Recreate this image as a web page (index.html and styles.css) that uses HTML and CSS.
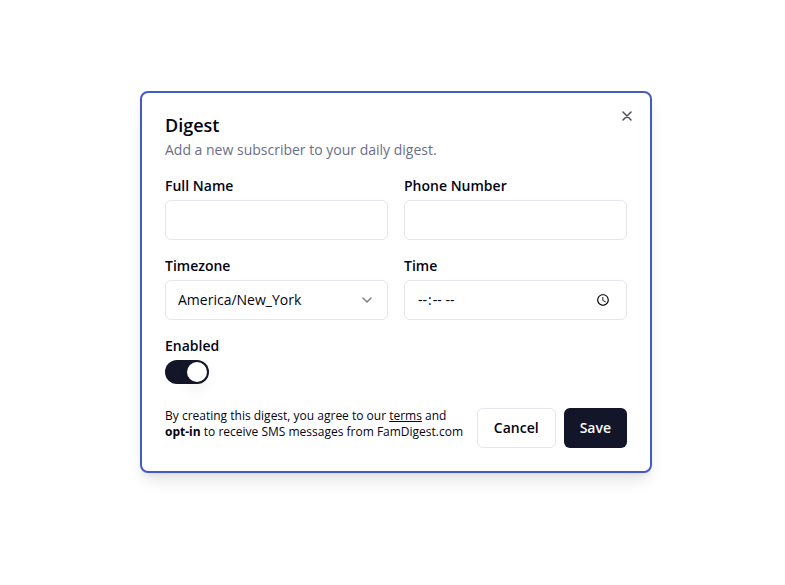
FILE: index.html
```html
<!DOCTYPE html>
<html lang="en">
<head>
<meta charset="utf-8">
<title>Digest</title>
<link rel="stylesheet" href="styles.css">
</head>
<body>
<main class="dialog" role="dialog" aria-labelledby="title">
  <header class="dialog-header">
    <h1 id="title">Digest</h1>
    <p>Add a new subscriber to your daily digest.</p>
  </header>
  <button class="close" type="button" aria-label="Close">
    <svg viewBox="0 0 16 16" width="16" height="16"><path d="M4 4l8 8M12 4l-8 8"/></svg>
  </button>
  <form>
    <div class="fields">
      <div class="field">
        <label for="name">Full Name</label>
        <input class="control" id="name" type="text">
      </div>
      <div class="field">
        <label for="phone">Phone Number</label>
        <input class="control" id="phone" type="tel">
      </div>
      <div class="field">
        <label for="zone">Timezone</label>
        <div class="with-icon">
          <select class="control" id="zone"><option>America/New_York</option></select>
          <svg class="chevron" viewBox="0 0 16 16" width="16" height="16"><path d="M4 6l4 4L12 6"/></svg>
        </div>
      </div>
      <div class="field">
        <label for="time">Time</label>
        <input class="control" id="time" type="time">
      </div>
      <div class="field">
        <label for="enabled">Enabled</label>
        <input class="switch" id="enabled" type="checkbox" role="switch" checked>
      </div>
    </div>
    <footer class="dialog-footer">
      <p>By creating this digest, you agree to our <a href="#terms">terms</a> and <strong>opt-in</strong> to receive SMS messages from FamDigest.com</p>
      <div class="actions">
        <button class="button" type="button">Cancel</button>
        <button class="button primary" type="submit">Save</button>
      </div>
    </footer>
  </form>
</main>
</body>
</html>
```
FILE: styles.css
```css
* {
  box-sizing: border-box;
}

body {
  margin: 0;
  padding: 0 0 21px 7px;
  min-height: 100vh;
  display: flex;
  align-items: center;
  justify-content: center;
  background: #fff;
  color: #030414;
  font: 14px/20px "Open Sans", "Noto Sans", sans-serif;
}

h1,
p {
  margin: 0;
}

.dialog {
  position: relative;
  width: 100%;
  max-width: 512px;
  padding: 23px;
  border: 2px solid #465ac4;
  border-radius: 8px;
  background: #fff;
  box-shadow: 0 10px 15px -3px rgb(0 0 0 / 10%), 0 4px 6px -4px rgb(0 0 0 / 10%);
}

.dialog-header {
  margin-bottom: 16px;
}

.dialog-header h1 {
  margin-bottom: 6px;
  font-size: 18px;
  line-height: 18px;
  font-weight: 600;
}

.dialog-header p {
  color: #686f88;
}

.close {
  position: absolute;
  top: 15px;
  right: 15px;
  display: flex;
  padding: 0;
  border: 0;
  background: none;
}

svg {
  fill: none;
  stroke: #030414;
  stroke-width: 1.5;
  stroke-linecap: round;
  stroke-linejoin: round;
}

.close svg {
  opacity: 0.7;
}

.fields {
  display: grid;
  grid-template-columns: 1fr 1fr;
  gap: 16px;
}

.field {
  display: flex;
  flex-direction: column;
  gap: 4px;
}

.field label {
  font-weight: 600;
}

.control {
  display: block;
  width: 100%;
  height: 40px;
  padding: 0 12px;
  border: 1px solid #e5e6ef;
  border-radius: 6px;
  background: #fff;
  color: inherit;
  font: inherit;
  appearance: none;
}

input[type="time"] {
  padding: 8px 12px;
}

.with-icon {
  position: relative;
}

.chevron {
  position: absolute;
  top: 12px;
  right: 13px;
  opacity: 0.5;
  pointer-events: none;
}

.switch {
  width: 44px;
  height: 24px;
  margin: 0;
  padding: 2px;
  border-radius: 12px;
  background: #131629;
  appearance: none;
}

.switch::before {
  content: "";
  display: block;
  width: 20px;
  height: 20px;
  margin-left: auto;
  border-radius: 50%;
  background: #fff;
  box-shadow: 0 10px 15px -3px rgb(0 0 0 / 10%);
}

.dialog-footer {
  display: flex;
  justify-content: space-between;
  gap: 8px;
  margin-top: 24px;
}

.dialog-footer p {
  font-size: 12px;
  line-height: 16px;
}

.dialog-footer a {
  color: inherit;
}

.actions {
  display: flex;
  gap: 8px;
}

.button {
  height: 40px;
  padding: 0 16px;
  border: 1px solid #e5e6ef;
  border-radius: 6px;
  background: #fff;
  color: inherit;
  font: inherit;
  font-weight: 600;
}

.primary {
  border: 0;
  background: #131629;
  color: #f8fafc;
}
```
